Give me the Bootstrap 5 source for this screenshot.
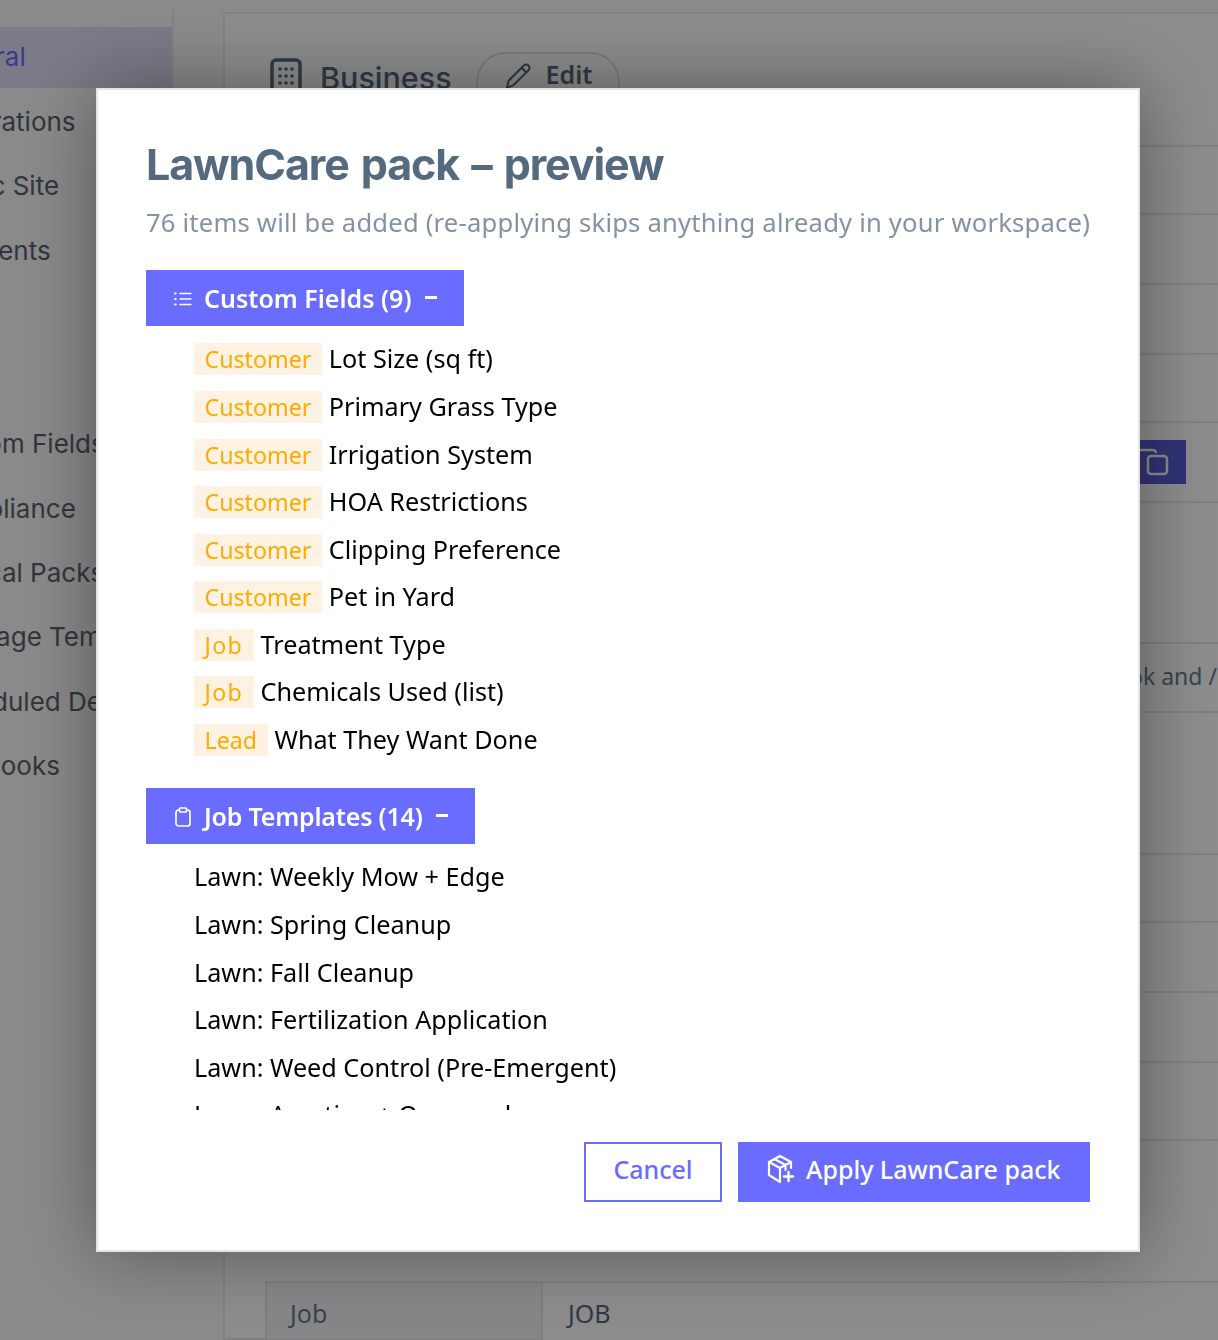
<!DOCTYPE html>
<html lang="en">
<head>
<meta charset="utf-8">
<title>LawnCare pack preview</title>
<link href="https://cdn.jsdelivr.net/npm/bootstrap@5.3.0/dist/css/bootstrap.min.css" rel="stylesheet">
<style>
html,body{height:100%;overflow:hidden}
body{font-family:"Noto Sans","Liberation Sans",sans-serif;background:#fbfbfb;color:#000}
.page-wrap{width:1218px;height:1340px;overflow:hidden;display:flex;align-items:flex-start}
.side-rail{flex:0 0 264px;min-width:0;margin-left:-90px;margin-top:10px;height:1100px;border-right:2px solid #ececec;padding-top:17px}
.side-link{display:block;height:64.4px;padding-left:20px;font:400 26px/62px Inter,sans-serif;color:#5a6270;white-space:nowrap;text-decoration:none}
.side-link.on{background:#dfdff7;color:#696cff;height:61px;line-height:60px;margin-bottom:3px}
.side-gap{height:129px}
.main-panel{flex:0 0 1100px;margin-left:49px;margin-top:12px;height:1328px;background:#fff;border:2px solid #ececec;padding:0 0 0 40px}
.biz-head{height:131px;padding-top:38px;gap:18px}
.biz-glyph{margin-left:5px;margin-top:6px}
.biz-title{font:500 30.5px/1.2 Inter,sans-serif;color:#566a7f;padding-top:8px}
.edit-pill{height:60px;width:144px;margin-left:6px;border:2px solid #e0e0e0;border-radius:30px;color:#566a7f;font:600 25px/1 "Noto Sans",sans-serif;padding:0 0 16px 26px;gap:14px}
.edit-pill svg{margin-top:4px}
.row-stack{display:grid;grid-template-rows:68px 70px 70px 68px 80px 141px 69px 142px 68px 70px 70px 78px 142px 60px;width:1050px}
.row-line{border-top:2px solid #e8e8e8}
.copy-row{justify-content:flex-end;padding-right:129px;padding-top:17px}
.copy-btn{width:60px;height:44px;background:#5a5cd8;color:#fff}
.text-row{justify-content:flex-end;padding-right:98px;padding-top:19px;font:400 23px/1.2 "Noto Sans",sans-serif;color:#697a8d;white-space:nowrap}
.job-row{background:#f5f5f9;color:#697a8d;font-size:25px;border:2px solid #e8e8e8}
.job-a{width:276px;padding-left:23px;padding-bottom:8px;border-right:2px solid #e8e8e8;height:70px}
.job-b{padding-left:25px;padding-bottom:8px;color:#566a7f;background:#fff;flex:1;height:70px}
.modal-backdrop.dim{opacity:.45}
.pack-dialog{max-width:none;width:1044px;margin:88px 0 0 96px}
.pack-box{height:1164px;border:2px solid #e4e4e4;border-radius:0;padding:49px 48px 48px;box-shadow:0 0 70px rgba(0,0,0,.38);flex-direction:column}
.pack-title{font:700 43px/1.2 Inter,sans-serif;letter-spacing:-1.1px;word-spacing:3px;color:#566a7f;margin:0}
.pack-sub{font:400 25.6px/1.5 "Noto Sans",sans-serif;letter-spacing:.2px;color:#8592a3;margin:13px 0 0;white-space:nowrap}
.pack-scroll{height:840px;margin-top:28px;overflow:hidden}
.group-btn{height:56px;background:#696cff;color:#fff;border:0;border-radius:0;font:600 25px/1 "Noto Sans",sans-serif;padding:2px 27px 0 27px;display:inline-flex;align-items:center;gap:11px}
.group-btn:hover,.group-btn:focus{background:#696cff;color:#fff}
.group-tight span:first-of-type{letter-spacing:-.2px}
.tick{width:12px;height:3px;background:#fff;display:inline-block;margin-left:2px;margin-top:-2px}
.pack-list{list-style:none;padding:9.5px 0 24.5px 48px;margin:0}
.pack-list li{height:47.55px;line-height:47.55px;font-size:25.2px;color:#000;white-space:nowrap}
.tag-soft{display:inline-block;background:#fff2e2;color:#ffab00;line-height:32px;height:32px;padding:0 10.5px;margin-right:7px;font-size:23.2px}
.tag-wide{letter-spacing:1.3px}
.pack-foot{gap:16px;margin-top:auto}
.foot-btn{height:60px;border-radius:0;font:500 25px/1 "Noto Sans",sans-serif;display:inline-flex;align-items:center;padding:0 0 6px}
.foot-cancel{width:138px;justify-content:center;background:#fff;border:2px solid #696cff;color:#696cff}
.foot-apply{width:352px;padding-left:29px;gap:11px;background:#696cff;border:0;color:#fff}
</style>
</head>
<body>
<div class="page-wrap">
  <aside class="side-rail">
    <a class="side-link on" href="#">General</a>
    <a class="side-link" href="#">Integrations</a>
    <a class="side-link" href="#">Public Site</a>
    <a class="side-link" href="#">Payments</a>
    <div class="side-gap"></div>
    <a class="side-link" href="#">Custom Fields</a>
    <a class="side-link" href="#">Compliance</a>
    <a class="side-link" href="#">Vertical Packs</a>
    <a class="side-link" href="#">Message Templates</a>
    <a class="side-link" href="#">Scheduled Deliveries</a>
    <a class="side-link" href="#">Webhooks</a>
  </aside>
  <main class="main-panel">
    <div class="biz-head d-flex align-items-start">
      <svg class="biz-glyph" width="32" height="40" viewBox="0 0 32 40" fill="none" stroke="#566a7f" stroke-width="3.500"><rect x="2" y="2" width="28" height="36" rx="4"/><g fill="#566a7f" stroke="none"><circle cx="10" cy="11" r="1.800"/><circle cx="16" cy="11" r="1.800"/><circle cx="22" cy="11" r="1.800"/><circle cx="10" cy="18" r="1.800"/><circle cx="16" cy="18" r="1.800"/><circle cx="22" cy="18" r="1.800"/><circle cx="10" cy="25" r="1.800"/><circle cx="16" cy="25" r="1.800"/><circle cx="22" cy="25" r="1.800"/></g></svg>
      <div class="biz-title">Business</div>
      <div class="edit-pill d-flex align-items-center">
        <svg width="28" height="28" viewBox="0 0 24 24" fill="none" stroke="#566a7f" stroke-width="1.800" stroke-linejoin="round"><path d="M2.500 22l1.500-6L17 3a2.600 2.600 0 0 1 4 4L8 20z"/><path d="M15 5l4 4"/></svg>Edit
      </div>
    </div>
    <div class="row-stack">
      <div class="row-line"></div>
      <div class="row-line"></div>
      <div class="row-line"></div>
      <div class="row-line"></div>
      <div class="row-line d-flex copy-row"><div class="copy-btn d-flex align-items-center justify-content-end"><svg class="me-3" width="34" height="30" viewBox="0 0 34 30" fill="none" stroke="#fff" stroke-width="2.500"><rect x="12" y="9" width="19" height="18" rx="3"/><path d="M2 16V6a3 3 0 0 1 3-3h12a3 3 0 0 1 3 3"/></svg></div></div>
      <div class="row-line"></div>
      <div class="row-line d-flex text-row">Connect your Facebook and /</div>
      <div class="row-line"></div>
      <div class="row-line"></div>
      <div class="row-line"></div>
      <div class="row-line"></div>
      <div class="row-line"></div>
      <div class="row-line"></div>
      <div class="d-flex job-row"><div class="job-a d-flex align-items-center">Job</div><div class="job-b d-flex align-items-center">JOB</div></div>
    </div>
  </main>
</div>
<div class="modal-backdrop dim show"></div>
<div class="modal d-block" tabindex="-1">
  <div class="modal-dialog pack-dialog">
    <div class="modal-content pack-box">
      <h2 class="pack-title">LawnCare pack – preview</h2>
      <p class="pack-sub">76 items will be added (re-applying skips anything already in your workspace)</p>
      <div class="pack-scroll">
        <button class="btn group-btn" type="button">
          <svg width="20" height="20" viewBox="0 0 20 20" fill="none" stroke="#fff" stroke-width="1.300" stroke-linecap="round"><path d="M7 4.500h11M7 10h11M7 15.500h11"/><path d="M2 4.500h.8M2 10h.8M2 15.500h.8" stroke-width="1.800"/></svg>
          <span>Custom Fields (9)</span><span class="tick"></span>
        </button>
        <ul class="pack-list">
          <li><span class="tag-soft">Customer</span>Lot Size (sq ft)</li>
          <li><span class="tag-soft">Customer</span>Primary Grass Type</li>
          <li><span class="tag-soft">Customer</span>Irrigation System</li>
          <li><span class="tag-soft">Customer</span>HOA Restrictions</li>
          <li><span class="tag-soft">Customer</span>Clipping Preference</li>
          <li><span class="tag-soft">Customer</span>Pet in Yard</li>
          <li><span class="tag-soft tag-wide">Job</span>Treatment Type</li>
          <li><span class="tag-soft tag-wide">Job</span>Chemicals Used (list)</li>
          <li><span class="tag-soft">Lead</span>What They Want Done</li>
        </ul>
        <button class="btn group-btn group-tight" type="button">
          <svg width="20" height="22" viewBox="0 0 20 22" fill="none" stroke="#fff" stroke-width="1.700"><rect x="3" y="4" width="14" height="16" rx="2.500"/><rect x="6.500" y="2" width="7" height="4" rx="1" fill="#696cff"/></svg>
          <span>Job Templates (14)</span><span class="tick"></span>
        </button>
        <ul class="pack-list">
          <li>Lawn: Weekly Mow + Edge</li>
          <li>Lawn: Spring Cleanup</li>
          <li>Lawn: Fall Cleanup</li>
          <li>Lawn: Fertilization Application</li>
          <li>Lawn: Weed Control (Pre-Emergent)</li>
          <li>Lawn: Aeration + Overseed</li>
        </ul>
      </div>
      <div class="pack-foot d-flex justify-content-end">
        <button class="btn foot-btn foot-cancel" type="button">Cancel</button>
        <button class="btn foot-btn foot-apply" type="button">
          <svg width="28" height="30" viewBox="0 0 28 30" fill="none" stroke="#fff" stroke-width="2.200" stroke-linejoin="round" stroke-linecap="round"><path d="M13 2L2 8v13l11 7M13 2l11 6-11 6L2 8M13 14v14M7.500 5l11 6v5M24 8v6"/><path d="M21.500 18v9M17 22.500h9" stroke-width="2.400"/></svg>
          Apply LawnCare pack
        </button>
      </div>
    </div>
  </div>
</div>
<script src="https://cdn.jsdelivr.net/npm/bootstrap@5.3.0/dist/js/bootstrap.bundle.min.js"></script>
</body>
</html>
